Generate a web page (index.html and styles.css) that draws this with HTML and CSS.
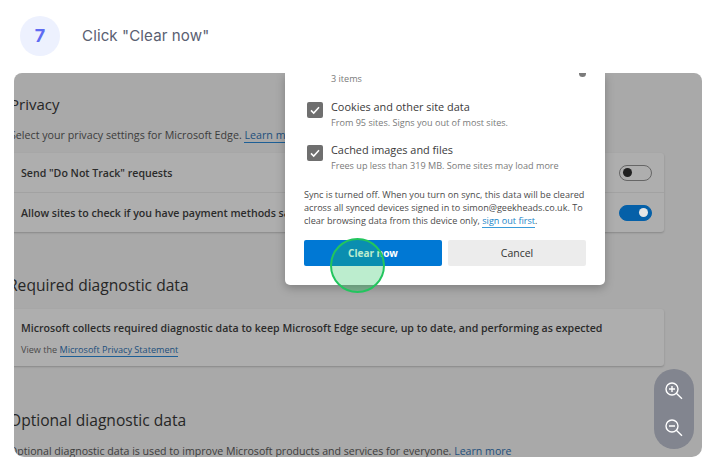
FILE: index.html
```html
<!DOCTYPE html>
<html lang="en">
<head>
<meta charset="utf-8">
<title>Step 7</title>
<link rel="stylesheet" href="styles.css">
</head>
<body>
<main class="step">
  <header class="step-head">
    <span class="badge">7</span>
    <h1 class="step-title">Click "Clear now"</h1>
  </header>
  <section class="shot">
    <div class="settings">
      <h2 class="sec-title first">Privacy</h2>
      <p class="sec-intro">Select your privacy settings for Microsoft Edge. <a class="link">Learn more</a></p>
      <div class="card">
        <div class="row">
          <span class="row-label">Send "Do Not Track" requests</span>
          <span class="toggle"><i class="knob"></i></span>
        </div>
        <div class="row divided">
          <span class="row-label">Allow sites to check if you have payment methods saved</span>
          <span class="toggle on"><i class="knob"></i></span>
        </div>
      </div>
      <h2 class="sec-title second">Required diagnostic data</h2>
      <div class="card info">
        <p class="row-label">Microsoft collects required diagnostic data to keep Microsoft Edge secure, up to date, and performing as expected</p>
        <p class="info-sub">View the <a class="link">Microsoft Privacy Statement</a></p>
      </div>
      <h2 class="sec-title third">Optional diagnostic data</h2>
      <p class="sec-intro tail">Optional diagnostic data is used to improve Microsoft products and services for everyone. <a class="link">Learn more</a></p>
    </div>

    <div class="dialog">
      <span class="thumb"></span>
      <p class="opt-sub items">3 items</p>
      <div class="opt">
        <span class="check"><svg viewBox="0 0 16 16" width="16" height="16"><path d="M4 8.4l2.7 2.7L12 5.2" fill="none" stroke="#fff" stroke-width="1.5"/></svg></span>
        <div>
          <p class="opt-title">Cookies and other site data</p>
          <p class="opt-sub">From 95 sites. Signs you out of most sites.</p>
        </div>
      </div>
      <div class="opt">
        <span class="check"><svg viewBox="0 0 16 16" width="16" height="16"><path d="M4 8.4l2.7 2.7L12 5.2" fill="none" stroke="#fff" stroke-width="1.5"/></svg></span>
        <div>
          <p class="opt-title">Cached images and files</p>
          <p class="opt-sub">Frees up less than 319 MB. Some sites may load more</p>
        </div>
      </div>
      <p class="sync">Sync is turned off. When you turn on sync, this data will be cleared<br>across all synced devices signed in to simon@geekheads.co.uk. To<br>clear browsing data from this device only, <a class="link bright">sign out first</a>.</p>
      <div class="actions">
        <button class="btn primary">Clear now</button>
        <button class="btn">Cancel</button>
      </div>
    </div>

    <span class="spot"></span>

    <div class="zoomer">
      <svg viewBox="0 0 24 24" width="24" height="24"><circle cx="10" cy="10" r="6" fill="none" stroke="#fff" stroke-width="1.4"/><path d="M14.3 14.3L20 19.8M7 10h6M10 7v6" fill="none" stroke="#fff" stroke-width="1.4"/></svg>
      <svg viewBox="0 0 24 24" width="24" height="24"><circle cx="10" cy="10" r="6" fill="none" stroke="#fff" stroke-width="1.4"/><path d="M14.3 14.3L20 19.8M7 10h6" fill="none" stroke="#fff" stroke-width="1.4"/></svg>
    </div>
  </section>
</main>
</body>
</html>
```
FILE: styles.css
```css
* { box-sizing: border-box; }
html, body { margin: 0; padding: 0; background: #fff; }
body { width: 715px; height: 471px; overflow: hidden; font-family: "Open Sans", "Liberation Sans", sans-serif; }
p, h1, h2 { margin: 0; font-weight: 400; }

.step { padding: 16px 13px 0 14px; }
.step-head { display: flex; gap: 22px; height: 57px; padding-left: 6px; align-items: flex-start; }
.badge { width: 40px; height: 40px; border-radius: 50%; background: #edf1fe; color: #5f6bf2; font: 700 18px/40px Inter, sans-serif; text-align: center; }
.step-title { font: 400 15.1px/39px Inter, sans-serif; color: #5a6072; letter-spacing: .1px; }

.shot { position: relative; height: 384px; border-radius: 8px 8px 10px 10px; background: #a9a9a9; overflow: hidden; color: #2d2d2d; }
.settings { margin-left: -6px; width: 656px; font-size: 11px; }
.sec-title { font-size: 15.6px; line-height: 22px; font-weight: 500; color: #262626; white-space: nowrap; }
.first { padding-top: 20px; line-height: 22px; box-sizing: content-box; margin-left: 2px; font-size: 15px; }
.sec-intro { margin: 11px 0 0 2px; line-height: 18px; font-size: 10.7px; color: #3c3c3c; white-space: nowrap; }
.link { color: #1d4f7c; border-bottom: 1px solid #1d5f96; }
.bright { color: #1a86c8; border-bottom-color: #3b9bd8; }

.card { background: #aeaeae; border-radius: 3px; box-shadow: 0 1px 2px rgba(0,0,0,.2); }
.sec-intro + .card { margin-top: 9px; height: 79px; }
.row { display: flex; align-items: center; justify-content: space-between; height: 39px; padding: 0 12px 0 13px; }
.divided { border-top: 1px solid #a2a2a2; height: 40px; }
.row-label { font-size: 10.6px; line-height: 16px; font-weight: 600; color: #2b2b2b; white-space: nowrap; }
.row .row-label { flex: none; }
.toggle { flex: none; width: 33px; height: 16px; border: 1px solid #666; border-radius: 8px; display: flex; align-items: center; padding: 0 3px; }
.knob { width: 9px; height: 9px; border-radius: 50%; background: #222; }
.toggle.on { background: #0560a8; border-color: #0560a8; justify-content: flex-end; }
.toggle.on .knob { background: #e4e4e4; }

.second { margin: 42px 0 0 0; }
.info { margin-top: 13px; height: 57px; padding: 11px 13px 0; }
.info-sub { margin-top: 7px; font-size: 9.1px; line-height: 14px; color: #4a4a4a; }
.third { margin: 43px 0 0 1px; }
.tail { margin-top: 11px; font-size: 10.6px; margin-left: 1px; }

.dialog { position: absolute; left: 271px; top: 0; width: 320px; height: 212px; background: #fff; border-radius: 0 0 5px 5px; box-shadow: 0 3px 10px rgba(0,0,0,.25); padding: 0 19px; color: #333; }
.thumb { position: absolute; right: 19px; top: 0; width: 7px; height: 4px; background: #7b7b7b; border-radius: 0 0 4px 4px; }
.opt { display: flex; gap: 8px; margin: 0 0 12px 3px; }
.check { flex: none; width: 16px; height: 16px; margin-top: 3px; background: #6f6f6f; border-radius: 2px; display: flex; }
.opt-title { font-size: 10.9px; line-height: 16px; font-weight: 500; color: #3a3a3a; }
.opt-sub { font-size: 9.1px; line-height: 15px; color: #7a7a7a; white-space: nowrap; }
.items { margin: 0 0 13px 27px; height: 13px; line-height: 12px; }
.sync { margin-top: 15px; font-size: 9.1px; line-height: 13px; color: #4b4b4b; white-space: nowrap; }
.actions { display: flex; gap: 6px; margin-top: 13px; }
.btn { width: 138px; height: 26px; border: 0; border-radius: 2px; background: #ececec; color: #333; font: 500 10.5px "Open Sans", sans-serif; }
.primary { background: #0078d4; color: #fff; font-weight: 700; font-size: 10px; }

.spot { position: absolute; left: 316px; top: 165px; width: 55px; height: 55px; border-radius: 50%; border: 2px solid #22c55e; background: rgba(34,197,94,.3); }
.zoomer { position: absolute; left: 640px; top: 296px; width: 40px; height: 80px; border-radius: 20px; background: #82858f; display: flex; flex-direction: column; align-items: center; gap: 13px; padding-top: 10px; }
```
